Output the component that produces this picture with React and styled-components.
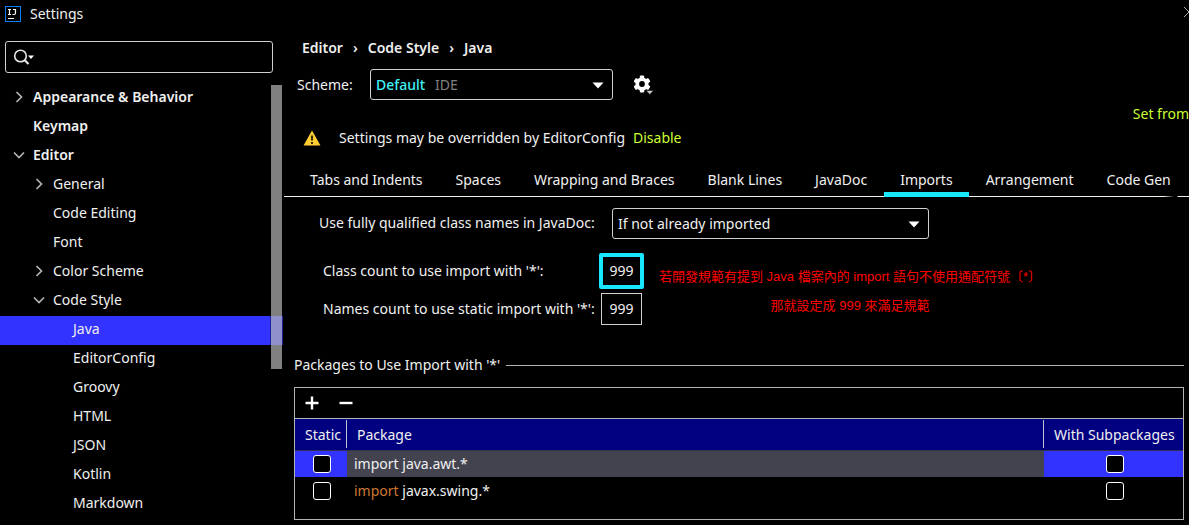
import React, { useState } from "react";
import styled, { createGlobalStyle, css } from "styled-components";

const Global = createGlobalStyle`
  * { box-sizing: border-box; }
  html, body { margin: 0; background: #000; }
  body {
    color: #f0f0f0;
    font: 14px/20px "Noto Sans", "Open Sans", sans-serif;
    overflow: hidden;
  }
  button, input, select { font: inherit; color: inherit; }
  a { color: #ccff33; text-decoration: none; white-space: nowrap; }
`;

const Window = styled.div`
  display: flex;
  flex-direction: column;
  min-height: 100vh;
`;

const TitleBar = styled.header`
  display: flex;
  align-items: center;
  height: 28px;
  padding-left: 5px;
  gap: 9px;
  h1 { flex: 1; margin: 0; font-size: 14px; font-weight: 400; }
`;

const IconButton = styled.button`
  display: flex;
  align-items: center;
  justify-content: center;
  padding: 0;
  border: 0;
  background: none;
  color: #fff;
`;

const CloseButton = styled(IconButton)`
  margin-right: -6px;
  margin-bottom: 4px;
  color: #b0b0b0;
`;

const Body = styled.div`
  display: flex;
  flex: 1;
  min-width: 0;
`;

const Sidebar = styled.aside`
  flex: 0 0 284px;
  padding-top: 13px;
`;

const SearchBox = styled.label`
  display: flex;
  align-items: center;
  height: 32px;
  margin: 0 11px 11px 5px;
  padding-left: 7px;
  border: 1px solid #d0d0d0;
  border-radius: 3px;
  input {
    flex: 1;
    min-width: 0;
    border: 0;
    outline: 0;
    background: none;
  }
`;

const TreeArea = styled.nav`
  position: relative;
`;

const Tree = styled.ul`
  margin: 0;
  padding: 0;
  list-style: none;
`;

const TreeRow = styled.li`
  display: flex;
  align-items: center;
  height: 29px;
  margin-right: 1px;
  padding-left: ${(p) => 12 + p.$level * 20}px;
  padding-bottom: 4px;
  gap: 8px;
  font-weight: ${(p) => (p.$level === 0 ? 600 : 400)};
  ${(p) =>
    p.$selected &&
    css`background: linear-gradient(to left, #202099 13px, #3333ff 13px);`}
`;

const Twisty = styled.span`
  display: flex;
  width: 13px;
  justify-content: center;
`;

const ScrollThumb = styled.div`
  position: absolute;
  top: 1px;
  right: 2px;
  width: 11px;
  height: 284px;
  background: rgba(255, 255, 255, 0.5);
`;

const Main = styled.main`
  flex: 1;
  min-width: 0;
  padding-top: 10px;
`;

const Breadcrumb = styled.nav`
  display: flex;
  align-items: center;
  height: 20px;
  padding-left: 18px;
  gap: 10px;
  font-weight: 600;
`;

const SchemeRow = styled.div`
  display: flex;
  align-items: center;
  margin-top: 11px;
  padding-left: 13px;
  label { width: 73px; }
`;

const SelectFrame = styled.div`
  position: relative;
  width: ${(p) => p.$width}px;
  color: #fff;
  select {
    display: block;
    appearance: none;
    width: 100%;
    height: 31px;
    padding: 0 32px 0 5px;
    border: 1px solid #d0d0d0;
    border-radius: 3px;
    outline: 0;
    background: #000;
    color: ${(p) => (p.$accent ? "#3ff0f5" : "#f0f0f0")};
    font-weight: ${(p) => (p.$accent ? 500 : 400)};
  }
`;

const SelectArrow = styled.svg`
  position: absolute;
  right: 9px;
  top: 13px;
  pointer-events: none;
`;

const SelectHint = styled.span`
  position: absolute;
  left: 65px;
  top: 6px;
  color: #808080;
  pointer-events: none;
`;

const GearButton = styled(IconButton)`
  margin-left: 21px;
`;

const LinkRow = styled.div`
  display: flex;
  justify-content: flex-end;
  height: 20px;
  margin-top: 4px;
`;

const Notice = styled.p`
  display: flex;
  align-items: center;
  height: 20px;
  margin: 4px 0 0;
  padding-left: 19px;
  svg { margin-right: 18px; }
  a { margin-left: 8px; }
`;

const TabList = styled.div`
  display: flex;
  gap: 1px;
  height: 35px;
  margin-top: 15px;
  padding-left: 10px;
  background:
    linear-gradient(to left, #f0f0f0 11px, #000 12px, #000 15px, #f0f0f0 25px)
    left 33px / 100% 1px no-repeat;
`;

const Tab = styled.button`
  height: 34px;
  padding: 4px 16px 0;
  border: 0;
  border-bottom: 5px solid ${(p) => (p.$active ? "#19e6ff" : "transparent")};
  background: none;
  white-space: nowrap;
`;

const Form = styled.div`
  padding: 10px 0 0 35px;
`;

const FormRow = styled.div`
  display: flex;
  align-items: center;
  label { width: 293px; padding-bottom: 2px; white-space: nowrap; }
`;

const Counts = styled.div`
  display: flex;
  align-items: center;
  margin-top: 14px;
  padding-left: 4px;
`;

const CountGrid = styled.div`
  display: grid;
  grid-template-columns: 276px 45px;
  row-gap: 4px;
  align-items: center;
  justify-items: start;
  label { white-space: nowrap; }
`;

const CountInput = styled.input`
  justify-self: center;
  width: ${(p) => (p.$focused ? 45 : 41)}px;
  height: ${(p) => (p.$focused ? 36 : 32)}px;
  padding: 0 0 2px;
  border: ${(p) => (p.$focused ? "4px solid #19e6ff" : "1px solid #d0d0d0")};
  border-radius: ${(p) => (p.$focused ? 2 : 0)}px;
  outline: 0;
  background: #000;
  text-align: center;
`;

const Annotation = styled.p`
  margin: 4px 0 0 15px;
  color: #f00;
  font: 13px/29px "Liberation Sans", "Noto Sans CJK TC", sans-serif;
  text-align: center;
  white-space: nowrap;
`;

const Packages = styled.section`
  margin: 30px 5px 0 10px;
`;

const SectionTitle = styled.h2`
  display: flex;
  align-items: center;
  gap: 6px;
  height: 20px;
  margin: 0 0 12px;
  font-size: 14px;
  font-weight: 400;
  &::after { content: ""; flex: 1; height: 1px; background: #b4b4b4; }
`;

const Panel = styled.div`
  height: 133px;
  border: 1px solid #b4b4b4;
`;

const Toolbar = styled.div`
  display: flex;
  align-items: center;
  gap: 20px;
  height: 31px;
  padding-left: 10px;
  border-bottom: 1px solid #b4b4b4;
`;

const PackageTable = styled.table`
  width: 100%;
  table-layout: fixed;
  border-collapse: collapse;
  th, td { padding: 0; text-align: left; font-weight: 400; white-space: nowrap; }
  th { height: 31px; background: #000080; border-bottom: 1px solid #33334d; }
  td { height: 27px; }
`;

const HeadCell = styled.span`
  display: block;
  height: 28px;
  padding: 5px 0 0 10px;
  border-right: ${(p) => (p.$last ? 0 : 1)}px solid #c0c0d0;
`;

const PackageRow = styled.tr`
  td {
    padding-left: 2px;
    background: ${(p) => (p.$selected ? "#3333ff" : "transparent")};
  }
  td:nth-child(2) {
    padding-left: 7px;
    background: ${(p) => (p.$selected ? "#43434f" : "transparent")};
  }
`;

const Keyword = styled.span`
  color: ${(p) => (p.$selected ? "inherit" : "#cc7832")};
`;

const Checkbox = styled.input.attrs({ type: "checkbox" })`
  display: block;
  appearance: none;
  width: 18px;
  height: 18px;
  margin: 0 auto;
  border: 1px solid #fff;
  border-radius: 3px;
  background: #000;
`;

const tree = [
  { name: "Appearance & Behavior", level: 0, state: "closed" },
  { name: "Keymap", level: 0 },
  { name: "Editor", level: 0, state: "open" },
  { name: "General", level: 1, state: "closed" },
  { name: "Code Editing", level: 1 },
  { name: "Font", level: 1 },
  { name: "Color Scheme", level: 1, state: "closed" },
  { name: "Code Style", level: 1, state: "open" },
  { name: "Java", level: 2, selected: true },
  { name: "EditorConfig", level: 2 },
  { name: "Groovy", level: 2 },
  { name: "HTML", level: 2 },
  { name: "JSON", level: 2 },
  { name: "Kotlin", level: 2 },
  { name: "Markdown", level: 2 },
];

const tabs = [
  "Tabs and Indents",
  "Spaces",
  "Wrapping and Braces",
  "Blank Lines",
  "JavaDoc",
  "Imports",
  "Arrangement",
  "Code Gen",
];

const packages = [
  { name: "java.awt.*", selected: true },
  { name: "javax.swing.*" },
];

function Chevron({ open }) {
  return (
    <svg width="12" height="12" viewBox="0 0 12 12" fill="none" stroke="#b4b4b4" strokeWidth="1.7">
      <path d={open ? "M1 3.5 6 8.5 11 3.5" : "M3.5 1 8.5 6 3.5 11"} />
    </svg>
  );
}

function Logo() {
  return (
    <svg width="16" height="16" viewBox="0 0 16 16" fill="none">
      <rect x=".5" y=".5" width="15" height="15" stroke="#087cfa" />
      <path d="M3 3.5h3M4.5 3.5v5M3 8.5h3M8 3.5h2.500v3.500q0 1.500-1.500 1.500H7.500M3 12.500h6" stroke="#fff" strokeWidth="1.200" />
    </svg>
  );
}

function SearchIcon() {
  return (
    <svg width="22" height="18" viewBox="0 0 22 18" fill="none">
      <circle cx="7.500" cy="8" r="5.800" stroke="#e6e6e6" strokeWidth="1.600" />
      <path d="m11.500 12 4 4" stroke="#e6e6e6" strokeWidth="2.200" />
      <path d="M15 7.500h6l-3 3.500z" fill="#fff" />
    </svg>
  );
}

function GearIcon() {
  return (
    <svg width="20" height="20" viewBox="0 0 20 20">
      <g fill="#fff">
        {[0, 60, 120].map((a) => (
          <rect key={a} x="5.800" y=".5" width="4.400" height="17" rx="1" transform={`rotate(${a} 8 9)`} />
        ))}
      </g>
      <circle cx="8" cy="9" r="4.800" fill="none" stroke="#fff" strokeWidth="3.600" />
      <circle cx="8" cy="9" r="2.900" fill="#000" />
      <path d="M12 15.500h7.500l-3.700 4z" fill="#c8c8c8" stroke="#000" strokeWidth=".5" />
    </svg>
  );
}

function Select({ id, width, value, accent, hint }) {
  return (
    <SelectFrame $width={width} $accent={accent}>
      <select id={id} defaultValue={value}>
        <option>{value}</option>
      </select>
      {hint && <SelectHint>{hint}</SelectHint>}
      <SelectArrow width="12" height="7" viewBox="0 0 12 7">
        <path d="M.5.5h11L6 6.500z" fill="#fff" />
      </SelectArrow>
    </SelectFrame>
  );
}

export default function App() {
  const [active, setActive] = useState("Imports");
  return (
    <Window>
      <Global />
      <TitleBar>
        <Logo />
        <h1>Settings</h1>
        <CloseButton aria-label="Close">
          <svg width="12" height="12" viewBox="0 0 12 12" stroke="currentColor">
            <path d="m1 1 10 10M11 1 1 11" />
          </svg>
        </CloseButton>
      </TitleBar>
      <Body>
        <Sidebar>
          <SearchBox>
            <SearchIcon />
            <input type="text" aria-label="Search settings" />
          </SearchBox>
          <TreeArea>
            <Tree>
              {tree.map((n) => (
                <TreeRow key={n.name} $level={n.level} $selected={n.selected}>
                  <Twisty>{n.state && <Chevron open={n.state === "open"} />}</Twisty>
                  {n.name}
                </TreeRow>
              ))}
            </Tree>
            <ScrollThumb />
          </TreeArea>
        </Sidebar>
        <Main>
          <Breadcrumb>
            <span>Editor</span>
            <span>›</span>
            <span>Code Style</span>
            <span>›</span>
            <span>Java</span>
          </Breadcrumb>
          <SchemeRow>
            <label htmlFor="scheme">Scheme:</label>
            <Select id="scheme" width={243} value="Default" accent hint="IDE" />
            <GearButton aria-label="Scheme actions">
              <GearIcon />
            </GearButton>
          </SchemeRow>
          <LinkRow>
            <a href="#set-from">Set from</a>
          </LinkRow>
          <Notice>
            <svg width="18" height="16" viewBox="0 0 18 16">
              <path d="M9 .5 17.500 15.500H.5z" fill="#ffcc33" />
              <path d="M9 5.500v5M9 12v2" stroke="#332a00" strokeWidth="2" />
            </svg>
            Settings may be overridden by EditorConfig
            <a href="#disable">Disable</a>
          </Notice>
          <TabList role="tablist">
            {tabs.map((t) => (
              <Tab
                key={t}
                role="tab"
                aria-selected={t === active}
                $active={t === active}
                onClick={() => setActive(t)}
              >
                {t}
              </Tab>
            ))}
          </TabList>
          <Form>
            <FormRow>
              <label htmlFor="qualified">Use fully qualified class names in JavaDoc:</label>
              <Select id="qualified" width={317} value="If not already imported" />
            </FormRow>
            <Counts>
              <CountGrid>
                <label htmlFor="class-count">Class count to use import with '*':</label>
                <CountInput id="class-count" type="text" defaultValue="999" $focused />
                <label htmlFor="names-count">Names count to use static import with '*':</label>
                <CountInput id="names-count" type="text" defaultValue="999" />
              </CountGrid>
              <Annotation>
                若開發規範有提到 Java 檔案內的 import 語句不使用通配符號〔*〕
                <br />
                那就設定成 999 來滿足規範
              </Annotation>
            </Counts>
          </Form>
          <Packages>
            <SectionTitle>Packages to Use Import with '*'</SectionTitle>
            <Panel>
              <Toolbar>
                <IconButton aria-label="Add package">
                  <svg width="14" height="14" viewBox="0 0 14 14" stroke="#fff" strokeWidth="2.400">
                    <path d="M7 .5v13M.5 7h13" />
                  </svg>
                </IconButton>
                <IconButton aria-label="Remove package">
                  <svg width="14" height="14" viewBox="0 0 14 14" stroke="#fff" strokeWidth="2.400">
                    <path d="M.5 7h13" />
                  </svg>
                </IconButton>
              </Toolbar>
              <PackageTable>
                <colgroup>
                  <col width="52" />
                  <col />
                  <col width="139" />
                </colgroup>
                <thead>
                  <tr>
                    <th><HeadCell>Static</HeadCell></th>
                    <th><HeadCell>Package</HeadCell></th>
                    <th><HeadCell $last>With Subpackages</HeadCell></th>
                  </tr>
                </thead>
                <tbody>
                  {packages.map((p) => (
                    <PackageRow key={p.name} $selected={p.selected}>
                      <td><Checkbox aria-label={`Static ${p.name}`} /></td>
                      <td>
                        <Keyword $selected={p.selected}>import</Keyword> {p.name}
                      </td>
                      <td><Checkbox aria-label={`With subpackages ${p.name}`} /></td>
                    </PackageRow>
                  ))}
                </tbody>
              </PackageTable>
            </Panel>
          </Packages>
        </Main>
      </Body>
    </Window>
  );
}
